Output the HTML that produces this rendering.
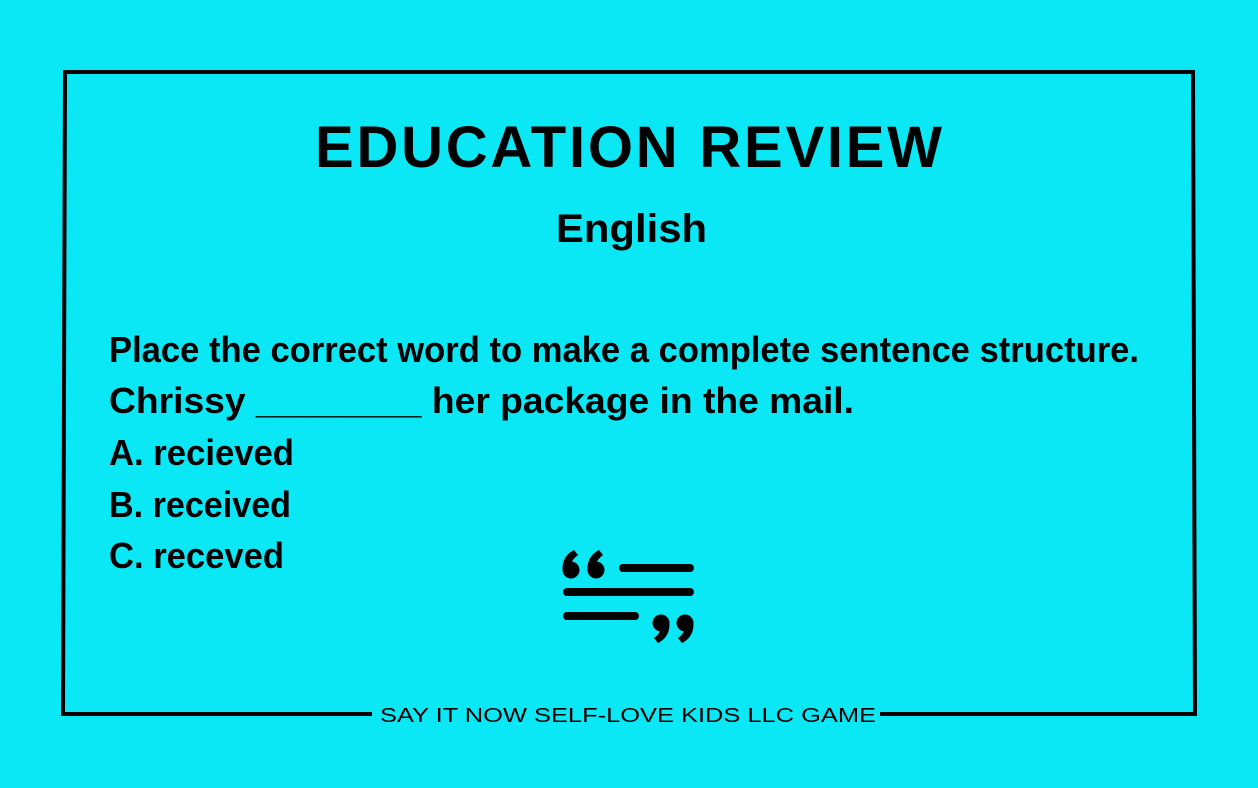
<!DOCTYPE html>
<html><head><style>html,body{margin:0;padding:0;background:#0BE8F5;}svg{display:block}</style></head>
<body>
<svg width="1258" height="788" viewBox="0 0 1258 788" xmlns="http://www.w3.org/2000/svg" font-family="Liberation Sans, sans-serif">
<rect width="1258" height="788" fill="#0BE8F5"/>
<polyline points="372,714 63,714 65,72 1193,72 1195,714 880,714" fill="none" stroke="#000" stroke-width="4"/>
<text x="628" y="722" text-anchor="middle" font-size="20" textLength="496" lengthAdjust="spacingAndGlyphs" fill="#000">SAY IT NOW SELF-LOVE KIDS LLC GAME</text>
<text x="315" y="167" font-size="58" font-weight="bold" textLength="627" lengthAdjust="spacing">EDUCATION REVIEW</text>
<text x="556" y="242" font-size="40" font-weight="bold" textLength="151" lengthAdjust="spacingAndGlyphs">English</text>
<g font-size="36" font-weight="bold">
<text x="109" y="362" textLength="1030" lengthAdjust="spacingAndGlyphs">Place the correct word to make a complete sentence structure.</text>
<text x="109" y="413" textLength="745" lengthAdjust="spacingAndGlyphs">Chrissy ________ her package in the mail.</text>
<text x="109" y="465" textLength="185" lengthAdjust="spacingAndGlyphs">A. recieved</text>
<text x="109" y="517" textLength="182" lengthAdjust="spacingAndGlyphs">B. received</text>
<text x="109" y="568" textLength="175" lengthAdjust="spacingAndGlyphs">C. receved</text>
</g>
<g fill="#000" stroke="#000" stroke-linecap="round" stroke-width="8">
<line x1="623" y1="568" x2="690" y2="568"/>
<line x1="567" y1="592" x2="690" y2="592"/>
<line x1="567" y1="616" x2="635" y2="616"/>
<g stroke="none">
<circle cx="571" cy="570" r="8.5"/><path d="M562.5 570 Q562 556 574 550 L578 555 Q571 560 571 566 Z"/>
<circle cx="596" cy="570" r="8.5"/><path d="M587.5 570 Q587 556 599 550 L603 555 Q596 560 596 566 Z"/>
<circle cx="661" cy="623" r="8.5"/><path d="M669.5 623 Q670 637 658 643 L654 638 Q661 633 661 627 Z"/>
<circle cx="685" cy="623" r="8.5"/><path d="M693.5 623 Q694 637 682 643 L678 638 Q685 633 685 627 Z"/>
</g></g>
</svg>
</body></html>
